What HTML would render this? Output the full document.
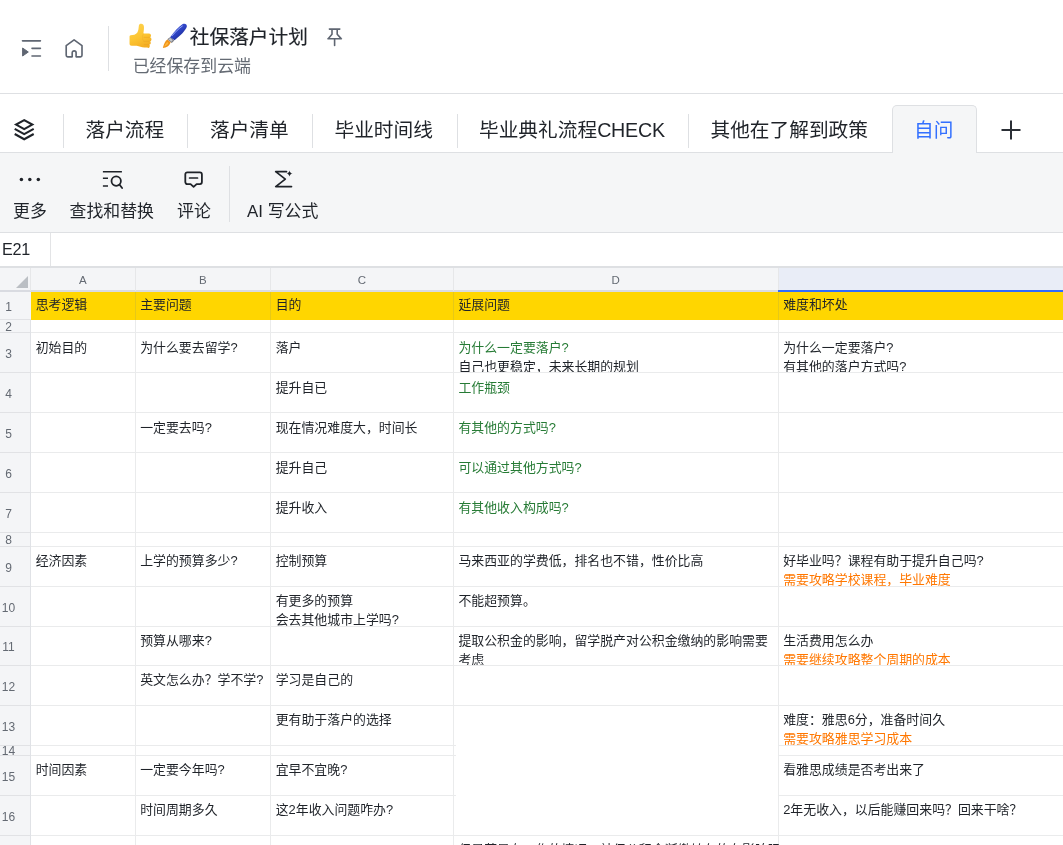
<!DOCTYPE html>
<html lang="zh-CN">
<head>
<meta charset="utf-8">
<title>社保落户计划</title>
<style>
html,body{margin:0;padding:0}
body{width:1063px;height:845px;overflow:hidden;background:#fff;position:relative;font-family:"Liberation Sans", "Noto Sans CJK SC", sans-serif;color:#1f2329;-webkit-font-smoothing:antialiased}
*{box-sizing:border-box}
div,span,svg{position:absolute}
.t{white-space:nowrap;line-height:1}
.hl{height:1px;background:#eaebec}
.vl{width:1px;background:#eaebec}
.cell{font-weight:400;font-size:12.9px;line-height:19px;white-space:nowrap;overflow:hidden}
.cell span{position:static;display:block}
.rn{font-size:12px;color:#646a73;width:17px;text-align:center;left:0;line-height:12px}
.cn{font-size:11.5px;color:#646a73;text-align:center;line-height:12px;top:273.5px}
.tab{font-size:19.7px;line-height:20px;top:120.2px;white-space:nowrap;color:#1f2329}
.tl{font-size:16.9px;line-height:17px;top:202.700px;white-space:nowrap;color:#1f2329}

</style>
</head>
<body>
<div style="left:0;top:0;width:1063px;height:845px;will-change:transform">
<!-- header -->
<svg style="left:21px;top:39px;width:21px;height:19px" viewBox="0 0 21 19"><path d="M1.500 1.800H19.400M11 9.300H19.400M11 17H19.400" stroke="#5f6672" stroke-width="1.650" stroke-linecap="round" fill="none"/><path d="M1.600 9v8l5.700-4z" fill="#5f6672" stroke="#5f6672" stroke-width="1" stroke-linejoin="round"/></svg>
<svg style="left:64px;top:38px;width:21px;height:21px" viewBox="0 0 21 21"><path d="M2.200 7.600 10.100 1.800 18 7.600V17.300a1.500 1.500 0 0 1-1.500 1.500H12.100V14.800a1.950 1.950 0 0 0-3.900 0V18.800H3.700a1.500 1.500 0 0 1-1.500-1.500z" stroke="#5f6672" stroke-width="1.650" fill="none" stroke-linejoin="round"/></svg>
<div style="left:108px;top:26px;width:1.3px;height:45px;background:#dee0e3"></div>
<svg role="img" aria-label="thumbs up" style="left:126px;top:20px;width:30px;height:30px" viewBox="0 0 845 845"><defs><linearGradient id="tg" x1="0.2" y1="0" x2="0.6" y2="1"><stop offset="0" stop-color="#fed24f"/><stop offset="0.55" stop-color="#fcc532"/><stop offset="1" stop-color="#f4ad22"/></linearGradient></defs><path d="M130 430C200 425 280 410 320 350C350 300 355 230 362 160C368 108 440 92 482 130C522 170 506 290 490 380L650 380a55 55 0 0 1 15 108a56 56 0 0 1-5 112a46 46 0 0 1-15 92a43 43 0 0 1-45 86L520 775C430 770 380 730 300 722L160 722C120 722 100 700 100 660L100 470C100 445 110 432 130 430Z" fill="url(#tg)"/><path d="M505 490H672M505 600H682M515 692H655" stroke="#e8a020" stroke-width="13" stroke-linecap="round" fill="none"/><path d="M488 388C452 440 452 560 502 602" stroke="#eda828" stroke-width="11" fill="none" stroke-linecap="round"/></svg>
<svg role="img" aria-label="paintbrush" style="left:160px;top:20px;width:30px;height:30px" viewBox="0 0 845 845"><defs><linearGradient id="bg" x1="0.25" y1="0.2" x2="0.75" y2="0.8"><stop offset="0" stop-color="#3a52d6"/><stop offset="0.55" stop-color="#2b40c0"/><stop offset="1" stop-color="#1c2a8e"/></linearGradient></defs><path d="M205 545 290 478 402 575 332 648Z" fill="#7c7e84"/><path d="M235 545 290 505 360 570 320 615Z" fill="#c4c6ca"/><path d="M208 552C150 590 105 680 80 790C180 780 262 738 300 628Z" fill="#ef9318"/><path d="M200 620C165 650 138 700 118 752C172 732 218 700 240 650Z" fill="#fdb53c"/><path d="M285 485C400 330 520 190 640 115C700 85 765 115 755 185C735 290 560 450 410 572Z" fill="url(#bg)"/><path d="M345 440C440 330 530 235 630 170" stroke="#a9b8f8" stroke-width="24" stroke-linecap="round" fill="none"/></svg>
<div class="t" style="left:189.800px;top:27px;font-size:19.7px;line-height:20px;font-weight:400;-webkit-text-stroke:0.15px #1f2329;color:#1f2329">社保落户计划</div>
<svg style="left:326px;top:28px;width:17px;height:19px" viewBox="0 0 17 19"><path d="M3.400 1.100H13.800M6 1.100V6.200L2.400 10.400M11.200 1.100V6.200L14.900 10.400M1.900 10.700H15.400M8.600 10.700V17.500" stroke="#5f6672" stroke-width="1.600" fill="none" stroke-linecap="round" stroke-linejoin="round"/></svg>
<div class="t" style="left:132.700px;top:58px;font-size:16.9px;line-height:17px;color:#646a73">已经保存到云端</div>
<div style="left:0;top:92.500px;width:1063px;height:1.200px;background:#dee0e3"></div>
<!-- sheet tabs -->
<div style="left:0;top:152px;width:1063px;height:81px;background:#f5f6f7"></div>
<div style="left:0;top:152px;width:1063px;height:1.200px;background:#dee0e3"></div>
<div style="left:892px;top:105px;width:84.500px;height:47.500px;background:#f5f6f7;border:1.200px solid #dee0e3;border-bottom:none;border-radius:5px 5px 0 0"></div>
<svg style="left:12px;top:117px;width:24px;height:24px" viewBox="0 0 24 24"><path d="M12.200 3.100 20.300 7.600 12.200 12.100 4.100 7.600z" stroke="#1f2329" stroke-width="2.100" fill="none" stroke-linejoin="miter"/><path d="M2.700 11.900 12.200 17.100 21.700 11.900M2.700 17 12.200 22.200 21.700 17" stroke="#1f2329" stroke-width="2.100" fill="none" stroke-linejoin="miter"/></svg>
<div style="left:62.5px;top:114px;width:1.200px;height:33.500px;background:#dee0e3"></div>
<div style="left:187px;top:114px;width:1.200px;height:33.500px;background:#dee0e3"></div>
<div style="left:311.5px;top:114px;width:1.200px;height:33.500px;background:#dee0e3"></div>
<div style="left:456.5px;top:114px;width:1.200px;height:33.500px;background:#dee0e3"></div>
<div style="left:687.5px;top:114px;width:1.200px;height:33.500px;background:#dee0e3"></div>
<div class="tab" style="left:85.500px">落户流程</div>
<div class="tab" style="left:210px">落户清单</div>
<div class="tab" style="left:334.500px">毕业时间线</div>
<div class="tab" style="left:479px">毕业典礼流程<span style="position:static;letter-spacing:-0.25px">CHECK</span></div>
<div class="tab" style="left:710.500px">其他在了解到政策</div>
<div class="tab" style="left:914px;color:#3370ff">自问</div>
<svg style="left:1001px;top:120px;width:20px;height:20px" viewBox="0 0 20 20"><path d="M10 .5V19.500M.5 10H19.500" stroke="#2b2f36" stroke-width="2" fill="none"/></svg>
<!-- toolbar -->
<svg style="left:19px;top:177px;width:23px;height:6px" viewBox="0 0 23 6"><circle cx="2.400" cy="2.400" r="1.750" fill="#1f2329"/><circle cx="10.800" cy="2.400" r="1.750" fill="#1f2329"/><circle cx="19.300" cy="2.400" r="1.750" fill="#1f2329"/></svg>
<div class="tl" style="left:13px">更多</div>
<svg style="left:102px;top:170px;width:23px;height:20px" viewBox="0 0 23 20"><path d="M0.900 1.800H19.900M0.900 8.200H6M0.900 15.900H6" stroke="#1f2329" stroke-width="1.500" fill="none"/><circle cx="14.200" cy="11.100" r="4.700" stroke="#1f2329" stroke-width="1.800" fill="none"/><path d="M17.600 14.700 20.100 18" stroke="#1f2329" stroke-width="1.800" stroke-linecap="round"/></svg>
<div class="tl" style="left:69.500px">查找和替换</div>
<svg style="left:184px;top:170px;width:20px;height:20px" viewBox="0 0 20 20"><path d="M3.300 2.400H15.900a2 2 0 0 1 2 2V12.100a2 2 0 0 1-2 2H12.600L9.600 16.900 6.600 14.100H3.300a2 2 0 0 1-2-2V4.400a2 2 0 0 1 2-2z" stroke="#1f2329" stroke-width="1.800" fill="none" stroke-linejoin="round"/><path d="M5.600 8H13.500" stroke="#1f2329" stroke-width="1.700" stroke-linecap="round"/></svg>
<div class="tl" style="left:177px">评论</div>
<div style="left:228.500px;top:165.500px;width:1.200px;height:56px;background:#dee0e3"></div>
<svg style="left:274px;top:170px;width:20px;height:20px" viewBox="0 0 20 20"><path d="M12.500 1.700H1.700L11.300 9.100 1.700 16.600H17.500" stroke="#1f2329" stroke-width="1.700" fill="none" stroke-linejoin="round" stroke-linecap="round"/><path d="M15.500 0.400C15.800 2.200 16.800 3.200 18.600 3.500C16.800 3.800 15.800 4.800 15.500 6.600C15.200 4.800 14.200 3.800 12.400 3.500C14.200 3.200 15.200 2.200 15.500 0.400Z" fill="#1f2329"/></svg>
<div class="tl" style="left:247px">AI 写公式</div>
<div style="left:0;top:232px;width:1063px;height:1.200px;background:#dee0e3"></div>
<!-- formula bar -->
<div style="left:0;top:233px;width:1063px;height:33.500px;background:#fff"></div>
<div class="t" style="left:2px;top:241.200px;font-size:16.2px;line-height:17px;letter-spacing:-0.3px;color:#1f2329">E21</div>
<div style="left:49.500px;top:233px;width:1.200px;height:33.500px;background:#e3e4e6"></div>
<div style="left:0;top:266px;width:1063px;height:1.500px;background:#dee0e3"></div>
<!-- grid -->
<div style="left:0;top:267.500px;width:1063px;height:23.500px;background:#f4f5f7"></div>
<div style="left:0;top:291px;width:30.500px;height:560px;background:#f4f5f7"></div>
<div style="left:778.500px;top:267.500px;width:285px;height:22.500px;background:#e9edf7"></div>
<div style="left:778px;top:289.800px;width:285px;height:2.200px;background:#2f6bff;z-index:3"></div>
<svg style="left:16px;top:275.500px;width:12px;height:12px" viewBox="0 0 12 12"><path d="M12 0V12H0z" fill="#bbbfc4"/></svg>
<div class="cn" style="left:30.5px;width:104.5px">A</div>
<div class="cn" style="left:135px;width:135.5px">B</div>
<div class="cn" style="left:270.5px;width:182.75px">C</div>
<div class="cn" style="left:453.25px;width:324.75px">D</div>
<div style="left:0;top:290px;width:778px;height:2px;background:#d9dbe1"></div>
<div class="vl" style="left:30.0px;top:267.500px;height:23px;background:#e6e7e9"></div>
<div class="vl" style="left:134.5px;top:267.500px;height:23px;background:#e6e7e9"></div>
<div class="vl" style="left:270.0px;top:267.500px;height:23px;background:#e6e7e9"></div>
<div class="vl" style="left:452.75px;top:267.500px;height:23px;background:#e6e7e9"></div>
<div class="vl" style="left:777.5px;top:267.500px;height:23px;background:#e6e7e9"></div>
<div style="left:30.500px;top:292px;width:1033px;height:27.500px;background:#ffd600"></div>
<div class="hl" style="left:0;top:319.0px;width:30.500px;background:#e1e2e5"></div>
<div class="hl" style="left:0;top:332.0px;width:30.500px;background:#e1e2e5"></div>
<div class="hl" style="left:30.500px;top:332.0px;width:1033px"></div>
<div class="hl" style="left:0;top:372.0px;width:30.500px;background:#e1e2e5"></div>
<div class="hl" style="left:30.500px;top:372.0px;width:1033px"></div>
<div class="hl" style="left:0;top:412.0px;width:30.500px;background:#e1e2e5"></div>
<div class="hl" style="left:30.500px;top:412.0px;width:1033px"></div>
<div class="hl" style="left:0;top:452.0px;width:30.500px;background:#e1e2e5"></div>
<div class="hl" style="left:30.500px;top:452.0px;width:1033px"></div>
<div class="hl" style="left:0;top:492.0px;width:30.500px;background:#e1e2e5"></div>
<div class="hl" style="left:30.500px;top:492.0px;width:1033px"></div>
<div class="hl" style="left:0;top:532.0px;width:30.500px;background:#e1e2e5"></div>
<div class="hl" style="left:30.500px;top:532.0px;width:1033px"></div>
<div class="hl" style="left:0;top:545.5px;width:30.500px;background:#e1e2e5"></div>
<div class="hl" style="left:30.500px;top:545.5px;width:1033px"></div>
<div class="hl" style="left:0;top:585.5px;width:30.500px;background:#e1e2e5"></div>
<div class="hl" style="left:30.500px;top:585.5px;width:1033px"></div>
<div class="hl" style="left:0;top:625.5px;width:30.500px;background:#e1e2e5"></div>
<div class="hl" style="left:30.500px;top:625.5px;width:1033px"></div>
<div class="hl" style="left:0;top:665.0px;width:30.500px;background:#e1e2e5"></div>
<div class="hl" style="left:30.500px;top:665.0px;width:1033px"></div>
<div class="hl" style="left:0;top:705.0px;width:30.500px;background:#e1e2e5"></div>
<div class="hl" style="left:30.500px;top:705.0px;width:1033px"></div>
<div class="hl" style="left:0;top:745.0px;width:30.500px;background:#e1e2e5"></div>
<div class="hl" style="left:30.500px;top:745.0px;width:425.500px"></div>
<div class="hl" style="left:778px;top:745.0px;width:285px"></div>
<div class="hl" style="left:0;top:755.0px;width:30.500px;background:#e1e2e5"></div>
<div class="hl" style="left:30.500px;top:755.0px;width:425.500px"></div>
<div class="hl" style="left:778px;top:755.0px;width:285px"></div>
<div class="hl" style="left:0;top:795.0px;width:30.500px;background:#e1e2e5"></div>
<div class="hl" style="left:30.500px;top:795.0px;width:425.500px"></div>
<div class="hl" style="left:778px;top:795.0px;width:285px"></div>
<div class="hl" style="left:0;top:835.0px;width:30.500px;background:#e1e2e5"></div>
<div class="hl" style="left:30.500px;top:835.0px;width:1033px"></div>
<div class="vl" style="left:30.0px;top:319.500px;height:530px;background:#e0e2e6"></div>
<div class="vl" style="left:134.5px;top:319.500px;height:530px"></div>
<div class="vl" style="left:270.0px;top:319.500px;height:530px"></div>
<div class="vl" style="left:452.75px;top:319.500px;height:530px"></div>
<div class="vl" style="left:777.5px;top:319.500px;height:530px"></div>
<div class="vl" style="left:134.5px;top:292px;height:27.500px;background:#e6c817"></div>
<div class="vl" style="left:270.0px;top:292px;height:27.500px;background:#e6c817"></div>
<div class="vl" style="left:452.75px;top:292px;height:27.500px;background:#e6c817"></div>
<div class="vl" style="left:777.5px;top:292px;height:27.500px;background:#e6c817"></div>
<div class="rn" style="top:300.8px">1</div>
<div class="rn" style="top:320.5px">2</div>
<div class="rn" style="top:348.0px">3</div>
<div class="rn" style="top:388.0px">4</div>
<div class="rn" style="top:428.0px">5</div>
<div class="rn" style="top:468.0px">6</div>
<div class="rn" style="top:508.0px">7</div>
<div class="rn" style="top:533.8px">8</div>
<div class="rn" style="top:561.5px">9</div>
<div class="rn" style="top:601.5px">10</div>
<div class="rn" style="top:641.2px">11</div>
<div class="rn" style="top:681.0px">12</div>
<div class="rn" style="top:721.0px">13</div>
<div class="rn" style="top:745.0px">14</div>
<div class="rn" style="top:771.0px">15</div>
<div class="rn" style="top:811.0px">16</div>
<div class="cell" style="left:35.7px;top:295px;width:98.5px;height:24.0px"><span>思考逻辑</span></div>
<div class="cell" style="left:140.2px;top:295px;width:129.5px;height:24.0px"><span>主要问题</span></div>
<div class="cell" style="left:275.7px;top:295px;width:176.75px;height:24.0px"><span>目的</span></div>
<div class="cell" style="left:458.45px;top:295px;width:318.75px;height:24.0px"><span>延展问题</span></div>
<div class="cell" style="left:783.2px;top:295px;width:279px;height:24.0px"><span>难度和坏处</span></div>
<div class="cell" style="left:35.7px;top:338.0px;width:98.5px;height:34.0px"><span>初始目的</span></div>
<div class="cell" style="left:140.2px;top:338.0px;width:129.5px;height:34.0px"><span>为什么要去留学?</span></div>
<div class="cell" style="left:275.7px;top:338.0px;width:176.75px;height:34.0px"><span>落户</span></div>
<div class="cell" style="left:458.45px;top:338.0px;width:318.75px;height:34.0px"><span style="color:#267b35">为什么一定要落户?</span><span>自己也更稳定，未来长期的规划</span></div>
<div class="cell" style="left:783.2px;top:338.0px;width:279px;height:34.0px"><span>为什么一定要落户?</span><span>有其他的落户方式吗?</span></div>
<div class="cell" style="left:275.7px;top:378.0px;width:176.75px;height:34.0px"><span>提升自已</span></div>
<div class="cell" style="left:458.45px;top:378.0px;width:318.75px;height:34.0px"><span style="color:#267b35">工作瓶颈</span></div>
<div class="cell" style="left:140.2px;top:418.0px;width:129.5px;height:34.0px"><span>一定要去吗?</span></div>
<div class="cell" style="left:275.7px;top:418.0px;width:176.75px;height:34.0px"><span>现在情况难度大，时间长</span></div>
<div class="cell" style="left:458.45px;top:418.0px;width:318.75px;height:34.0px"><span style="color:#267b35">有其他的方式吗?</span></div>
<div class="cell" style="left:275.7px;top:458.0px;width:176.75px;height:34.0px"><span>提升自己</span></div>
<div class="cell" style="left:458.45px;top:458.0px;width:318.75px;height:34.0px"><span style="color:#267b35">可以通过其他方式吗?</span></div>
<div class="cell" style="left:275.7px;top:498.0px;width:176.75px;height:34.0px"><span>提升收入</span></div>
<div class="cell" style="left:458.45px;top:498.0px;width:318.75px;height:34.0px"><span style="color:#267b35">有其他收入构成吗?</span></div>
<div class="cell" style="left:35.7px;top:551px;width:98.5px;height:34.5px"><span>经济因素</span></div>
<div class="cell" style="left:140.2px;top:551px;width:129.5px;height:34.5px"><span>上学的预算多少?</span></div>
<div class="cell" style="left:275.7px;top:551px;width:176.75px;height:34.5px"><span>控制预算</span></div>
<div class="cell" style="left:458.45px;top:551px;width:318.75px;height:34.5px"><span>马来西亚的学费低，排名也不错，性价比高</span></div>
<div class="cell" style="left:783.2px;top:551px;width:279px;height:34.5px"><span>好毕业吗？课程有助于提升自己吗?</span><span style="color:#ff7700">需要攻略学校课程，毕业难度</span></div>
<div class="cell" style="left:275.7px;top:591px;width:176.75px;height:34.5px"><span>有更多的预算</span><span>会去其他城市上学吗?</span></div>
<div class="cell" style="left:458.45px;top:591px;width:318.75px;height:34.5px"><span>不能超预算。</span></div>
<div class="cell" style="left:140.2px;top:631px;width:129.5px;height:34.0px"><span>预算从哪来?</span></div>
<div class="cell" style="left:458.45px;top:631px;width:318.75px;height:34.0px"><span>提取公积金的影响，留学脱产对公积金缴纳的影响需要</span><span>考虑</span></div>
<div class="cell" style="left:783.2px;top:631px;width:279px;height:34.0px"><span>生活费用怎么办</span><span style="color:#ff7700">需要继续攻略整个周期的成本</span></div>
<div class="cell" style="left:140.2px;top:670.0px;width:135px;height:35.0px"><span>英文怎么办？学不学?</span></div>
<div class="cell" style="left:275.7px;top:670.0px;width:176.75px;height:35.0px"><span>学习是自己的</span></div>
<div class="cell" style="left:275.7px;top:710.0px;width:176.75px;height:35.0px"><span>更有助于落户的选择</span></div>
<div class="cell" style="left:783.2px;top:710.0px;width:279px;height:35.0px"><span>难度：雅思6分，准备时间久</span><span style="color:#ff7700">需要攻略雅思学习成本</span></div>
<div class="cell" style="left:35.7px;top:760.0px;width:98.5px;height:35.0px"><span>时间因素</span></div>
<div class="cell" style="left:140.2px;top:760.0px;width:129.5px;height:35.0px"><span>一定要今年吗?</span></div>
<div class="cell" style="left:275.7px;top:760.0px;width:176.75px;height:35.0px"><span>宜早不宜晚?</span></div>
<div class="cell" style="left:783.2px;top:760.0px;width:279px;height:35.0px"><span>看雅思成绩是否考出来了</span></div>
<div class="cell" style="left:140.2px;top:800.0px;width:129.5px;height:35.0px"><span>时间周期多久</span></div>
<div class="cell" style="left:275.7px;top:800.0px;width:176.75px;height:35.0px"><span>这2年收入问题咋办?</span></div>
<div class="cell" style="left:783.2px;top:800.0px;width:279px;height:35.0px"><span>2年无收入，以后能赚回来吗？回来干啥？</span></div>
<div class="cell" style="left:458.45px;top:840.0px;width:340px;height:35.0px"><span>但是若是有工作的情况，社保公积金断缴转存的有影响吗?</span></div>
</div>
</body>
</html>
